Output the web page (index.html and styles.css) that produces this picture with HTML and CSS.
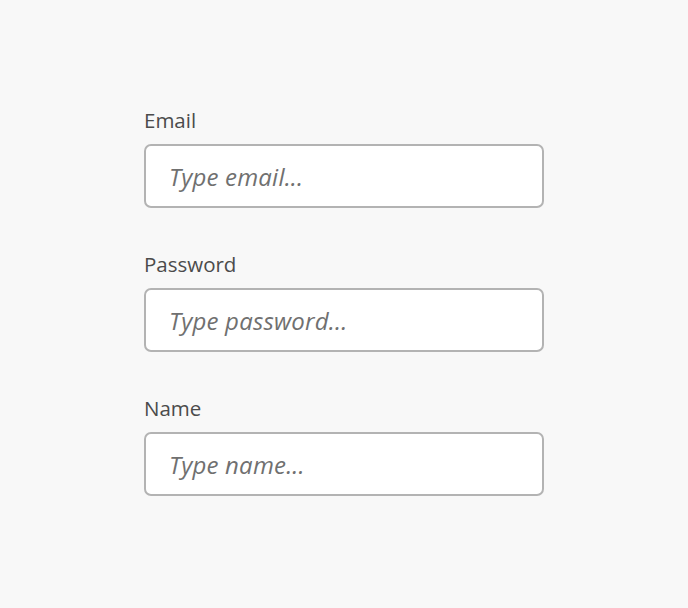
FILE: index.html
```html
<!DOCTYPE html>
<html lang="en">
<head>
    <meta charset="UTF-8">
    <meta name="viewport" content="width=device-width, initial-scale=1.0">
    <title>Sign up</title>
    <link rel="stylesheet" href="styles.css">
</head>
<body>
    <form class="form">
        <div class="field">
            <label for="email" class="field-label">Email</label>
            <input id="email" class="field-input" type="text" placeholder="Type email...">
        </div>

        <div class="field">
            <label for="password" class="field-label">Password</label>
            <input id="password" class="field-input" type="text" placeholder="Type password...">
        </div>

        <div class="field">
            <label for="name" class="field-label">Name</label>
            <input id="name" class="field-input" type="text" placeholder="Type name...">
        </div>
    </form>
</body>
</html>
```

FILE: styles.css
```css
body {
    margin: 0;
    height: 608px;
    background: #f8f8f8;
    font-family: "Open Sans", "Noto Sans", sans-serif;
    display: flex;
    justify-content: center;
}

.form {
    width: 400px;
    padding-top: 106px;
    display: flex;
    flex-direction: column;
    gap: 42px;
}

.field {
    display: flex;
    flex-direction: column;
}

.field-label {
    color: #4b4b4b;
    font-size: 20.5px;
    line-height: 28px;
    margin-bottom: 10px;
}

.field-input {
    box-sizing: border-box;
    width: 100%;
    height: 64px;
    margin: 0;
    padding: 0 22px 0 23px;
    background: white;
    border: 2px solid #b3b3b3;
    border-radius: 7px;
    font-family: inherit;
    font-size: 24px;
    font-style: italic;
    color: #4b4b4b;
    outline: none;
}

.field-input::placeholder {
    color: #707070;
    letter-spacing: 0.2px;
    opacity: 1;
}
```
